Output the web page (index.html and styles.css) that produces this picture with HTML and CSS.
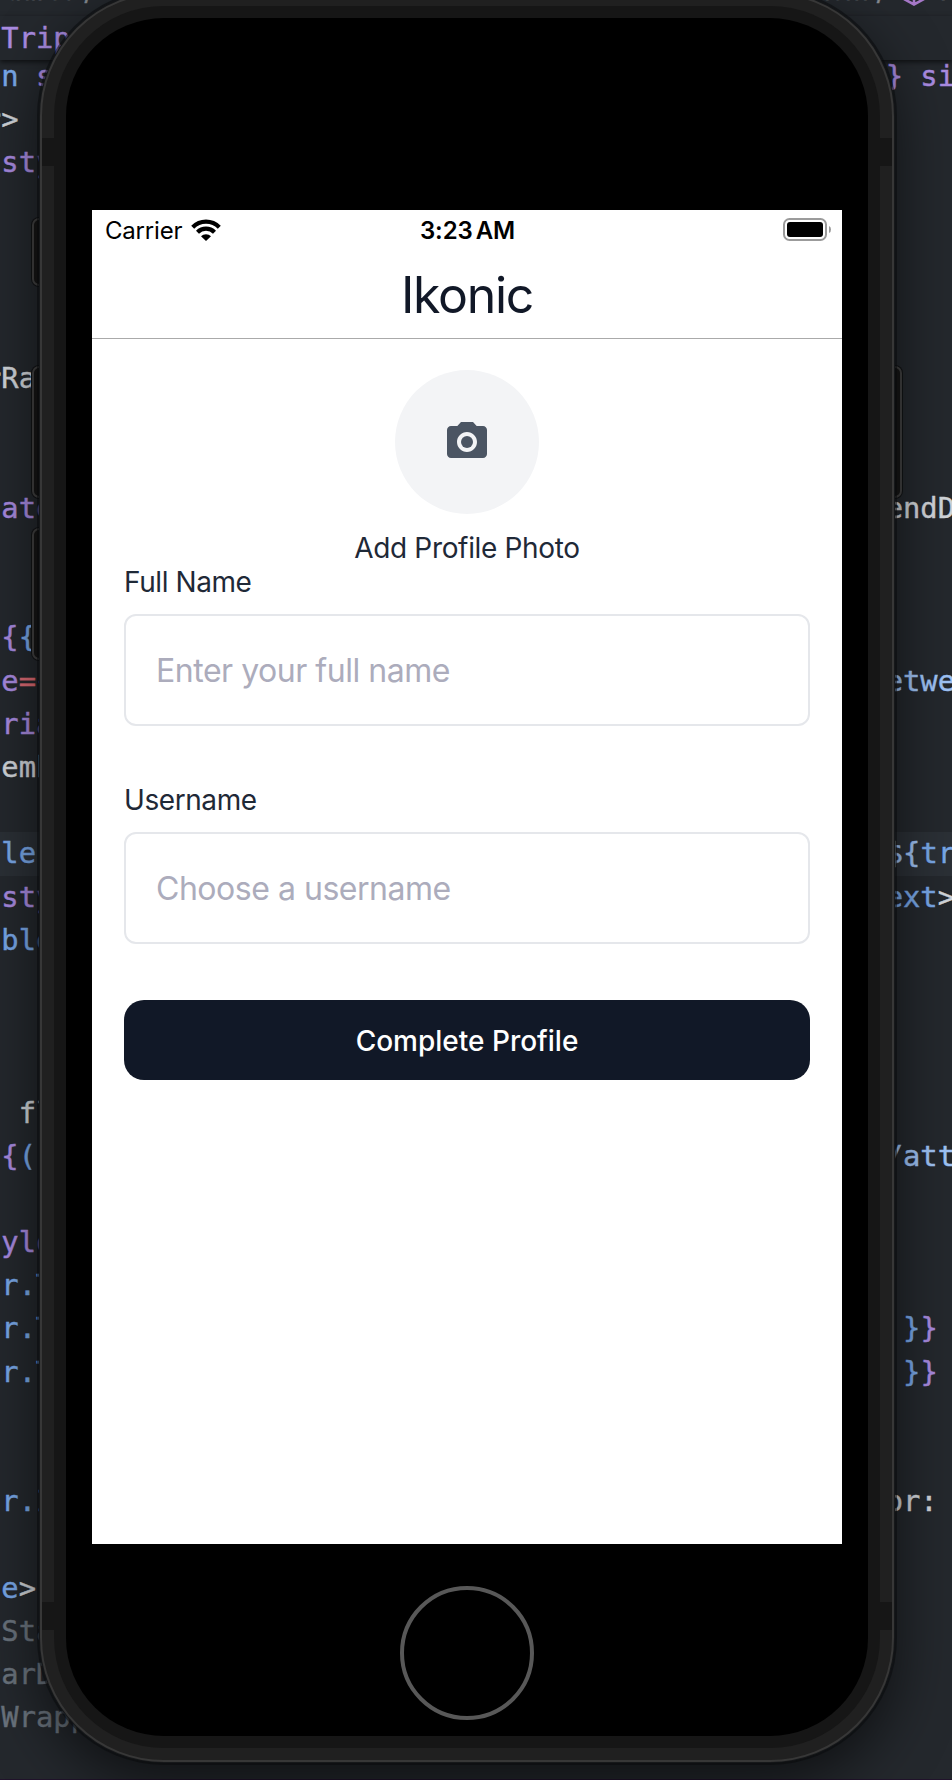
FILE: index.html
```html
<!DOCTYPE html>
<html lang="en">
<head>
<meta charset="utf-8">
<title>Ikonic</title>
<link rel="stylesheet" href="styles.css">
</head>
<body>
<div class="stage">
  <div class="editor">
    <div class="crumbs"><span class="crumb-left">dares /</span><span class="crumb-right">tem /</span>
      <svg class="cube" width="24" height="26" viewBox="0 0 24 26" fill="none" stroke="#a678c8" stroke-width="2.6"><path d="M2 7 12 1.500 22 7V19L12 24.500 2 19ZM2 7 12 12.500 22 7M12 12.500V24"/></svg><span class="crumb-last">T</span>
    </div>
    <div class="sticky"><span class="left p">&nbsp;Trip</span></div>
    <div class="code">
      <div class="line"><span class="left"> <b class="b">n</b> <b class="p">s</b></span><span class="p">} si</span></div>
      <div class="line"><span class="left"><b class="b">r</b>&gt;</span></div>
      <div class="line"><span class="left p"> sty</span></div>
      <div class="line"></div><div class="line"></div><div class="line"></div><div class="line"></div>
      <div class="line"><span class="left">rRa</span></div>
      <div class="line"></div><div class="line"></div>
      <div class="line"><span class="left p"> ate</span><span>endD</span></div>
      <div class="line"></div><div class="line"></div>
      <div class="line"><span class="left p"> {<b class="b">{</b></span></div>
      <div class="line"><span class="left p"> e<b class="r">=</b>{</span><span class="s">etwe</span></div>
      <div class="line"><span class="left p"> ria</span></div>
      <div class="line"><span class="left"> emb</span></div>
      <div class="line"></div>
      <div class="line current"><span class="left b"> le</span><span class="s">${<b class="b">tr</b></span></div>
      <div class="line"><span class="left p"> sty</span><span class="b">ext<b>&gt;</b></span></div>
      <div class="line"><span class="left b"> ble</span></div>
      <div class="line"></div><div class="line"></div><div class="line"></div>
      <div class="line"><span class="left">  fl</span></div>
      <div class="line"><span class="left p"> {<b class="b">(</b></span><span class="s">/att</span></div>
      <div class="line"></div>
      <div class="line"><span class="left p"> ylo</span></div>
      <div class="line"><span class="left b"> r.T</span></div>
      <div class="line"><span class="left b"> r.T</span><span class="b"> }<b class="p">}</b></span></div>
      <div class="line"><span class="left b"> r.T</span><span class="b"> }<b class="p">}</b></span></div>
      <div class="line"></div><div class="line"></div>
      <div class="line"><span class="left b"> r.I</span><span>or:</span></div>
      <div class="line"></div>
      <div class="line"><span class="left b"> e<b>&gt;</b></span></div>
      <div class="line"><span class="left g"> Sta</span></div>
      <div class="line"><span class="left g"> arD</span></div>
      <div class="line"><span class="left g"> Wrapp</span></div>
    </div>
  </div>

  <div class="key key-mute"></div>
  <div class="key key-up"></div>
  <div class="key key-down"></div>
  <div class="key key-power"></div>

  <div class="phone">
    <i class="gap gap-tl"></i><i class="gap gap-tr"></i><i class="gap gap-bl"></i><i class="gap gap-br"></i>
    <div class="rim">
      <div class="face">
        <div class="screen">
          <div class="status">
            <div class="carrier"><span>Carrier</span>
              <svg width="30" height="22" viewBox="0 0 30 22"><g fill="none" stroke="#000" stroke-width="4.200"><path d="M1.700 8.200A18.800 18.800 0 0 1 28.300 8.200"/><path d="M6.500 13.200A12 12 0 0 1 23.500 13.200"/></g><path d="M10 17.300A7 7 0 0 1 20 17.300L15 22Z"/></svg>
            </div>
            <div class="time">3:23 AM</div>
            <svg class="battery" width="49" height="23" viewBox="0 0 49 23"><rect x="1" y="1" width="42" height="21" rx="5.500" fill="none" stroke="#9b9b9b" stroke-width="2"/><rect x="4" y="4" width="36" height="15" rx="3"/><path d="M46 8Q48 8.500 48 11.500T46 15Z" fill="#9b9b9b"/></svg>
          </div>
          <header class="title">Ikonic</header>
          <main class="form">
            <div class="avatar"><svg width="48" height="48" viewBox="0 0 24 24" fill="#4b5563"><circle cx="12" cy="12" r="3"/><path d="M9 2 7.170 4H4c-1.100 0-2 .9-2 2v12c0 1.100.9 2 2 2h16c1.100 0 2-.9 2-2V6c0-1.100-.9-2-2-2h-3.170L15 2H9zm3 15c-2.760 0-5-2.240-5-5s2.240-5 5-5 5 2.240 5 5-2.240 5-5 5z"/></svg></div>
            <div class="add">Add Profile Photo</div>
            <label class="label" for="name">Full Name</label>
            <input class="input" id="name" placeholder="Enter your full name">
            <label class="label" for="user">Username</label>
            <input class="input" id="user" placeholder="Choose a username">
            <button class="submit">Complete Profile</button>
          </main>
        </div>
        <div class="home"></div>
      </div>
    </div>
  </div>
</div>
</body>
</html>
```
FILE: styles.css
```css
* { box-sizing: border-box; }
body { margin: 0; background: #24292e; }
.stage { position: relative; width: 952px; height: 1780px; overflow: hidden; }

/* editor behind the device */
.editor { height: 1780px; background: #24282d; border-bottom: 1px solid #21132b; overflow: hidden; font: 28.8px/43.2px "DejaVu Sans Mono", monospace; color: #d1d5da; -webkit-text-stroke: .4px; }
.editor b { font-weight: 400; color: #d1d5da; }
.editor .p { color: #a98be0; }
.editor .b { color: #79a8e8; }
.editor .s { color: #9fc3f5; }
.editor .r { color: #e06c75; }
.editor .g { color: #6a737d; }
.crumbs { display: flex; height: 16px; font: 27px/32px Inter, sans-serif; color: #858a90; }
.crumbs span { margin-top: -25px; }
.crumb-left { width: 822px; padding-left: 5px; }
.crumb-right { width: 81px; white-space: nowrap; }
.cube { flex: none; margin-top: -20px; }
.crumb-last { padding-left: 9px; }
.sticky { position: relative; height: 44px; padding-top: 1px; box-shadow: 0 2px 5px rgba(0,0,0,.6); white-space: pre; }
.code { margin-top: -5px; }
.line { display: flex; height: 43.2px; white-space: pre; }
.left { flex: none; width: 901.700px; margin-left: -16px; }
.sticky .left { display: block; }
.current { background: #2b3036; }

/* hardware buttons */
.key { position: absolute; width: 20px; height: 132px; border: 2px solid #414141; border-radius: 7px; background: #161616; box-shadow: 0 0 0 1px #121416; }
.key-mute { left: 32px; top: 218px; height: 68px; }
.key-up { left: 32px; top: 366px; }
.key-down { left: 32px; top: 528px; }
.key-power { left: 882px; top: 366px; }

/* device body */
.phone { position: absolute; left: 40px; top: -8px; width: 854px; height: 1770px; padding: 12px; border: 2px solid #373737; border-radius: 124px; background: #202020; box-shadow: 0 0 0 1px #16181a, 0 0 0 3px rgba(10,11,12,.55), 0 20px 60px rgba(0,0,0,.6); }
.gap { position: absolute; width: 12px; height: 28px; background: #161616; }
.gap-tl { left: 0; top: 144px; }
.gap-tr { right: 0; top: 144px; }
.gap-bl { left: 0; top: 1608px; }
.gap-br { right: 0; top: 1608px; }
.rim { height: 1742px; padding: 12px; border-radius: 110px; background: #161616; }
.face { display: flex; flex-direction: column; align-items: center; height: 1718px; padding-top: 192px; border-radius: 98px; background: #000; }
.screen { width: 750px; height: 1334px; background: #fff; font-family: Inter, sans-serif; color: #1f2937; }
.home { width: 134px; height: 134px; margin-top: 42px; border: 4px solid #585858; border-radius: 50%; }

/* app */
.status { display: grid; grid-template-columns: 1fr auto 1fr; align-items: center; height: 40px; padding: 0 10px 0 13px; font-size: 24px; line-height: 40px; color: #000; }
.carrier { display: flex; align-items: center; gap: 9px; letter-spacing: -.2px; }
.carrier span { padding-top: 2px; line-height: 38px; }
.time { padding: 2px 2px 0 0; line-height: 38px; font-weight: 600; word-spacing: -3px; letter-spacing: -.1px; }
.battery { justify-self: end; margin-bottom: 1px; }
.title { height: 89px; padding-top: 15px; border-bottom: 1px solid #aaa; text-align: center; font-size: 50px; line-height: 60px; color: #111827; letter-spacing: -1.300px; }
.form { display: flex; flex-direction: column; padding: 31px 32px 0; font-size: 28px; }
.avatar { display: flex; align-items: center; justify-content: center; align-self: center; width: 144px; height: 144px; border-radius: 50%; background: #f3f4f6; }
.add { margin-top: 17px; line-height: 34px; text-align: center; letter-spacing: -.330px; }
.label { line-height: 34px; margin-bottom: 15px; letter-spacing: -.420px; }
.input { height: 112px; margin: 0 0 57px; padding: 0 30px; border: 2px solid #e5e7eb; border-radius: 12px; background: #fff; font: 32px/40px Inter, sans-serif; letter-spacing: -.470px; color: #1f2937; }
.input::placeholder { color: #acacbc; opacity: 1; }
.submit { height: 80px; margin-top: -1px; padding: 1px 0 0; border: 0; border-radius: 20px; background: #111827; color: #fff; font: 500 28px/34px Inter, sans-serif; }
```
